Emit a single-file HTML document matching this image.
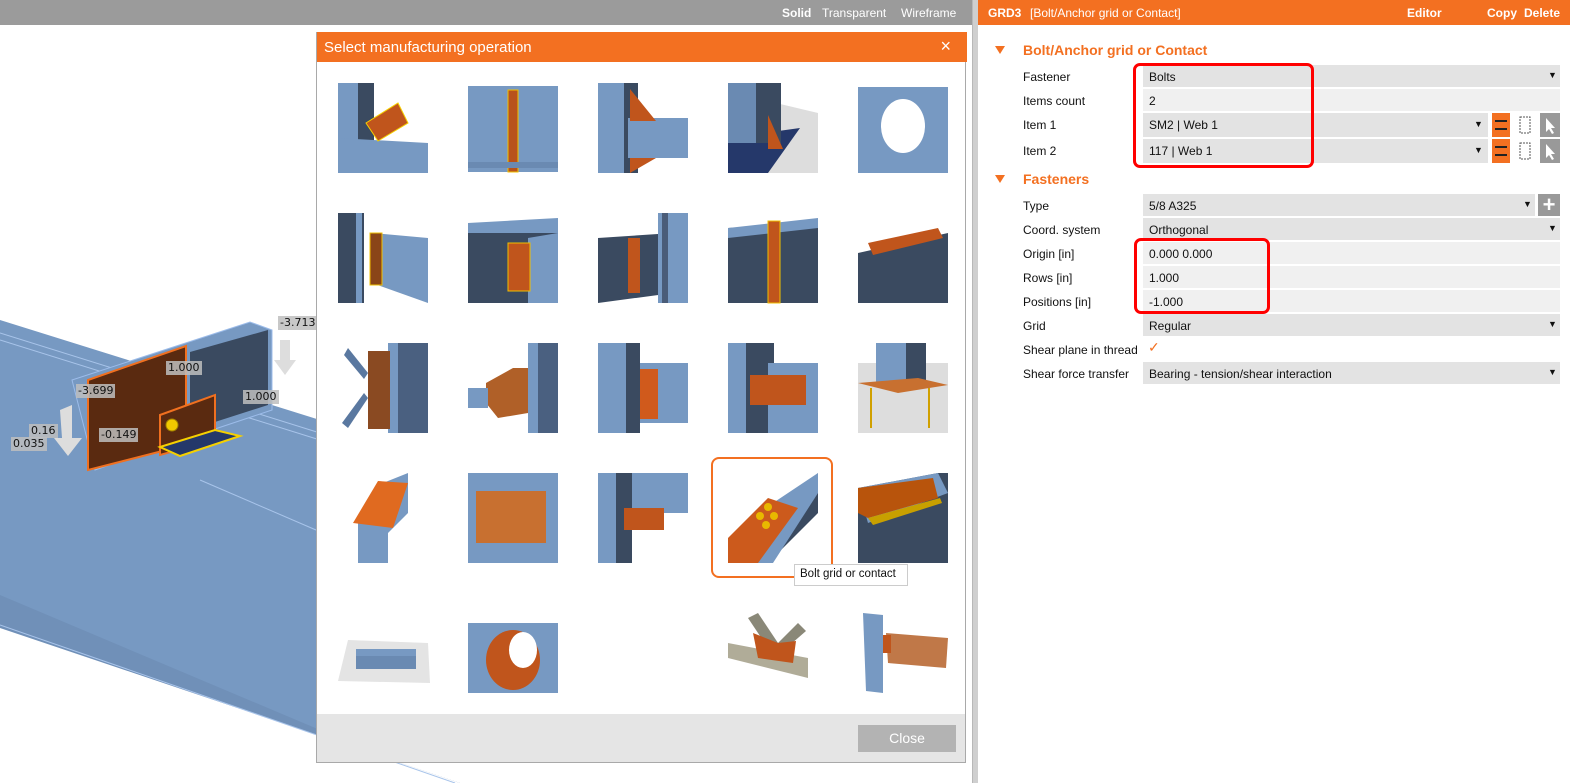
<!DOCTYPE html>
<html><head><meta charset="utf-8"><style>
*{margin:0;padding:0;box-sizing:border-box}
body{width:1570px;height:783px;overflow:hidden;background:#fff;font-family:"Liberation Sans",sans-serif;position:relative}
.abs{position:absolute}
.topbar{left:0;top:0;width:972px;height:25px;background:#9b9b9b;color:#fff;font-size:12px}
.topbar span{position:absolute;top:6px}
.split{left:972px;top:0;width:6px;height:783px;background:#cfcfcf;border-left:1px solid #b8b8b8}
.rhead{left:978px;top:0;width:592px;height:25px;background:#f37021;color:#fff;font-size:12px}
.rhead span{position:absolute;top:6px}
.dlg{left:316px;top:32px;width:650px;height:731px;border:1px solid #a9a9a9;border-top:none;background:#fff}
.dh{left:0;top:0;width:650px;height:30px;background:#f37021;color:#fff;font-size:15px;padding:7px 0 0 7px}
.foot{left:0;top:682px;width:648px;height:48px;background:#e5e5e5}
.close{left:541px;top:11px;width:98px;height:27px;background:#b3b3b3;color:#fff;font-size:14px;text-align:center;line-height:27px}
.lbl{position:absolute;left:1023px;font-size:12px;color:#111}
.fld{position:absolute;left:1143px;height:22px;font-size:12px;color:#111;padding:5px 0 0 6px}
.d{background:#e3e3e3}.l{background:#f0f0f0}
.arr{position:absolute;font-size:9px;color:#111}
.sec{position:absolute;left:1023px;font-size:14px;font-weight:bold;color:#f37021}
.tri{position:absolute;left:995px;width:0;height:0;border-left:5px solid transparent;border-right:5px solid transparent;border-top:8px solid #f37021}
.red{position:absolute;border:3px solid #f00;border-radius:7px}
.dim{position:absolute;background:rgba(190,190,190,.85);font-family:"DejaVu Sans",sans-serif;font-size:11px;color:#111;padding:0 2px;line-height:14px}
</style></head><body>

<svg class="abs" style="left:0;top:0" width="972" height="783">
 <polygon points="0,320 320,420 320,783 0,783" fill="#7799c2"/>
 <polygon points="0,595 0,628 460,783 320,783 320,730" fill="#7090b8"/>
 <polygon points="0,628 460,783 0,783" fill="#fff"/>
 <line x1="0" y1="625" x2="455" y2="783" stroke="#a8c4ea" stroke-width="1"/>
 <line x1="0" y1="333" x2="320" y2="433" stroke="#a8c4ea"/>
 <line x1="0" y1="340" x2="320" y2="440" stroke="#a8c4ea"/>
 <line x1="200" y1="480" x2="316" y2="530" stroke="#a8c4ea"/>
 <polygon points="72,380 250,322 272,330 272,410 182,440 95,470" fill="#7799c2" stroke="#9cbcea"/>
 <polygon points="190,352 268,330 268,405 190,430" fill="#3a4a60"/>
 <polygon points="88,380 186,346 186,445 88,470" fill="#5a2a10" stroke="#f07020" stroke-width="2"/>
 <polygon points="160,415 215,395 215,440 160,455" fill="#5a2a10" stroke="#f07020" stroke-width="2"/>
 <polygon points="160,447 215,430 240,436 180,456" fill="#24386a" stroke="#f5d000" stroke-width="2"/>
 <circle cx="172" cy="425" r="6" fill="#f0c800" stroke="#a08000"/>
 <polygon points="60,410 72,405 72,438 82,438 68,456 54,438 62,438" fill="#ddd"/>
 <polygon points="280,340 290,340 290,360 296,360 285,375 274,360 280,360" fill="#ddd"/>
</svg>
<div class="dim" style="left:278px;top:316px">-3.713</div>
<div class="dim" style="left:166px;top:361px">1.000</div>
<div class="dim" style="left:76px;top:384px">-3.699</div>
<div class="dim" style="left:243px;top:390px">1.000</div>
<div class="dim" style="left:99px;top:428px">-0.149</div>
<div class="dim" style="left:29px;top:424px">0.16</div>
<div class="dim" style="left:11px;top:437px">0.035</div>

<div class="abs topbar"><span style="left:782px;font-weight:bold">Solid</span><span style="left:822px">Transparent</span><span style="left:901px">Wireframe</span></div>
<div class="abs split"></div>
<div class="abs rhead"><span style="left:10px;font-weight:bold">GRD3</span><span style="left:52px">[Bolt/Anchor grid or Contact]</span><span style="left:429px;font-weight:bold">Editor</span><span style="left:509px;font-weight:bold">Copy</span><span style="left:546px;font-weight:bold">Delete</span></div>

<div class="abs dlg">
 <div class="abs dh">Select manufacturing operation<span style="position:absolute;right:16px;top:4px;font-size:18px;font-weight:normal">×</span></div>
 <svg class="abs" style="left:0;top:0" width="650" height="682">
  <g transform="translate(21,51)">
   <rect x="0" y="0" width="20" height="90" fill="#7799c2"/><rect x="20" y="0" width="16" height="90" fill="#3a4a60"/>
   <polygon points="0,55 90,60 90,90 0,90" fill="#7799c2"/><polygon points="28,40 60,20 70,40 40,58" fill="#c0551c" stroke="#f5d000"/>
  </g>
  <g transform="translate(151,54)">
   <rect width="90" height="86" fill="#7799c2"/><rect x="40" y="4" width="10" height="82" fill="#b8521c" stroke="#f0c000"/><rect y="76" width="90" height="6" fill="#6a8ab2"/>
  </g>
  <g transform="translate(281,51)">
   <rect width="26" height="90" fill="#7799c2"/><rect x="26" width="14" height="90" fill="#3a4a60"/>
   <rect x="30" y="35" width="60" height="40" fill="#7799c2"/><polygon points="32,6 58,38 32,38" fill="#c0551c"/><polygon points="32,75 58,75 32,90" fill="#c0551c"/>
  </g>
  <g transform="translate(411,51)">
   <polygon points="48,20 90,30 90,90 0,90 0,60" fill="#ddd"/><polygon points="0,55 72,45 40,90 0,90" fill="#25386a"/>
   <rect width="28" height="60" fill="#6a8ab2"/><rect x="28" width="25" height="60" fill="#3a4a60"/><polygon points="40,32 55,66 40,66" fill="#c0551c"/>
  </g>
  <g transform="translate(541,51)">
   <rect y="4" width="90" height="86" fill="#7799c2"/><ellipse cx="45" cy="43" rx="22" ry="27" fill="#fff"/>
  </g>
  <g transform="translate(21,181)">
   <rect width="26" height="90" fill="#3a4a60"/><rect x="18" width="6" height="90" fill="#7799c2"/><polygon points="34,20 90,25 90,90 34,70" fill="#7799c2"/><rect x="32" y="20" width="12" height="52" fill="#8a4518" stroke="#f0c000"/>
  </g>
  <g transform="translate(151,181)">
   <polygon points="0,10 90,10 90,90 0,90" fill="#3a4a60"/><polygon points="0,10 90,5 90,20 0,20" fill="#7799c2"/><polygon points="60,25 90,20 90,90 60,90" fill="#7799c2"/><rect x="40" y="30" width="22" height="48" fill="#c0551c" stroke="#f0c000"/>
  </g>
  <g transform="translate(281,181)">
   <polygon points="0,25 75,20 75,80 0,90" fill="#3a4a60"/><rect x="60" y="0" width="30" height="90" fill="#7799c2"/><rect x="64" width="6" height="90" fill="#4a5c78"/><rect x="30" y="25" width="12" height="55" fill="#c0551c"/>
  </g>
  <g transform="translate(411,181)">
   <polygon points="0,15 90,10 90,90 0,90" fill="#3a4a60"/><polygon points="0,15 90,5 90,15 0,25" fill="#7799c2"/><rect x="40" y="8" width="12" height="82" fill="#c0551c" stroke="#f0c000"/>
  </g>
  <g transform="translate(541,181)">
   <polygon points="0,40 90,20 90,90 0,90" fill="#3a4a60"/><polygon points="10,30 80,15 85,25 15,42" fill="#c0551c"/>
  </g>
  <g transform="translate(21,311)">
   <rect x="50" width="40" height="90" fill="#7799c2"/><rect x="60" width="30" height="90" fill="#4a6080"/><rect x="30" y="8" width="22" height="78" fill="#8a4a22"/><polygon points="10,5 30,30 26,36 6,12" fill="#5a78a0"/><polygon points="10,85 30,55 26,50 4,80" fill="#5a78a0"/>
  </g>
  <g transform="translate(151,311)">
   <rect x="60" width="30" height="90" fill="#7799c2"/><rect x="70" width="20" height="90" fill="#4a6080"/><polygon points="18,40 45,25 60,25 60,70 30,75 18,60" fill="#b06028"/><rect x="0" y="45" width="20" height="20" fill="#7799c2"/>
  </g>
  <g transform="translate(281,311)">
   <rect width="38" height="90" fill="#7799c2"/><rect x="28" width="14" height="90" fill="#3a4a60"/><rect x="42" y="20" width="48" height="60" fill="#7799c2"/><rect x="42" y="26" width="18" height="50" fill="#d05a1c"/>
  </g>
  <g transform="translate(411,311)">
   <rect width="18" height="90" fill="#7799c2"/><rect x="18" width="28" height="90" fill="#3a4a60"/><rect x="40" y="20" width="50" height="70" fill="#7799c2"/><rect x="22" y="32" width="56" height="30" fill="#c0551c"/>
  </g>
  <g transform="translate(541,311)">
   <rect y="20" width="90" height="70" fill="#ddd"/><rect x="18" width="30" height="40" fill="#7799c2"/><rect x="48" width="20" height="40" fill="#3a4a60"/><polygon points="0,40 60,35 90,42 40,50" fill="#c87030"/><rect x="12" y="45" width="2" height="40" fill="#d0a000"/><rect x="70" y="45" width="2" height="40" fill="#d0a000"/>
  </g>
  <g transform="translate(21,441)">
   <polygon points="20,90 20,50 45,10 70,0 70,40 50,60 50,90" fill="#7799c2"/><polygon points="15,50 40,8 70,10 55,55" fill="#e06a20"/>
  </g>
  <g transform="translate(151,441)">
   <rect width="90" height="90" fill="#7799c2"/><rect x="8" y="18" width="70" height="52" fill="#c87030"/>
  </g>
  <g transform="translate(281,441)">
   <rect width="22" height="90" fill="#7799c2"/><rect x="18" width="16" height="90" fill="#3a4a60"/><rect x="34" width="56" height="40" fill="#7799c2"/><rect x="26" y="35" width="40" height="22" fill="#c0551c"/>
  </g>
  <g transform="translate(411,441)">
   <polygon points="50,40 90,0 90,40 40,90" fill="#3a4a60"/><polygon points="30,40 90,0 90,20 45,90 30,90" fill="#7799c2"/><polygon points="0,65 40,25 70,35 30,90 0,90" fill="#cc5a1c"/>
   <circle cx="40" cy="34" r="4" fill="#e8b800"/><circle cx="32" cy="43" r="4" fill="#e8b800"/><circle cx="46" cy="43" r="4" fill="#e8b800"/><circle cx="38" cy="52" r="4" fill="#e8b800"/>
  </g>
  <g transform="translate(541,441)">
   <polygon points="0,15 80,0 90,0 90,90 0,90" fill="#3a4a60"/><polygon points="0,15 80,0 90,20 10,50" fill="#7799c2"/><polygon points="0,15 75,5 80,25 10,45 0,40" fill="#b8540c"/><polygon points="10,45 82,25 84,30 15,52" fill="#c8a000"/>
  </g>
  <g transform="translate(21,571)">
   <polygon points="10,37 90,40 92,80 0,78" fill="#e4e4e4"/><rect x="18" y="46" width="60" height="20" fill="#6a8ab2"/><rect x="18" y="46" width="60" height="7" fill="#7799c2"/>
  </g>
  <g transform="translate(151,571)">
   <rect y="20" width="90" height="70" fill="#7799c2"/><ellipse cx="45" cy="57" rx="27" ry="30" fill="#c0551c"/><ellipse cx="55" cy="47" rx="14" ry="18" fill="#fff"/>
  </g>
  <g transform="translate(411,571)">
   <polygon points="0,40 80,55 80,75 0,55" fill="#b0ac98"/><polygon points="20,15 30,10 50,40 40,45" fill="#8a8878"/><polygon points="70,20 78,28 55,48 48,42" fill="#8a8878"/><polygon points="25,30 50,40 68,38 65,60 30,55" fill="#c0551c"/>
  </g>
  <g transform="translate(541,571)">
   <polygon points="5,10 25,12 25,90 8,88" fill="#7799c2"/><polygon points="28,30 90,35 88,65 30,60" fill="#c07848"/><rect x="25" y="32" width="8" height="18" fill="#c0551c"/>
  </g>
  <rect x="395" y="426" width="120" height="119" rx="7" fill="none" stroke="#f37021" stroke-width="2"/>
 </svg>
 <div class="abs" style="left:477px;top:532px;width:114px;height:22px;background:#fff;border:1px solid #ccc;font-size:11.5px;padding:3px 0 0 5px;color:#111;white-space:nowrap;overflow:hidden">Bolt grid or contact</div>
 <div class="abs foot"><div class="abs close">Close</div></div>
</div>

<div class="tri" style="top:46px"></div><div class="sec" style="top:42px">Bolt/Anchor grid or Contact</div>
<div class="lbl" style="top:70px">Fastener</div><div class="fld d" style="top:65px;width:417px">Bolts</div><div class="arr" style="left:1548px;top:70px">▼</div>
<div class="lbl" style="top:94px">Items count</div><div class="fld l" style="top:89px;width:417px">2</div>
<div class="lbl" style="top:118px">Item 1</div><div class="fld d" style="top:113px;width:345px;height:24px">SM2 | Web 1</div><div class="arr" style="left:1474px;top:119px">▼</div>
<div class="lbl" style="top:144px">Item 2</div><div class="fld d" style="top:139px;width:345px;height:24px">117 | Web 1</div><div class="arr" style="left:1474px;top:145px">▼</div>
<svg class="abs" style="left:1492px;top:113px" width="78" height="52">
 <g><rect x="0" y="0" width="18" height="24" fill="#f37021"/><rect x="3" y="7" width="12" height="2" fill="#222"/><rect x="3" y="15" width="12" height="2" fill="#222"/>
 <rect x="28" y="4" width="10" height="16" fill="none" stroke="#555" stroke-dasharray="2,1"/>
 <rect x="48" y="0" width="20" height="24" fill="#999"/><path d="M54 5 L54 19 L57 16 L60 21 L62 20 L59 15 L63 15 Z" fill="#fff"/></g>
 <g transform="translate(0,26)"><rect x="0" y="0" width="18" height="24" fill="#f37021"/><rect x="3" y="7" width="12" height="2" fill="#222"/><rect x="3" y="15" width="12" height="2" fill="#222"/>
 <rect x="28" y="4" width="10" height="16" fill="none" stroke="#555" stroke-dasharray="2,1"/>
 <rect x="48" y="0" width="20" height="24" fill="#999"/><path d="M54 5 L54 19 L57 16 L60 21 L62 20 L59 15 L63 15 Z" fill="#fff"/></g>
</svg>
<div class="red" style="left:1133px;top:63px;width:181px;height:105px"></div>

<div class="tri" style="top:175px"></div><div class="sec" style="top:171px">Fasteners</div>
<div class="lbl" style="top:199px">Type</div><div class="fld d" style="top:194px;width:392px">5/8 A325</div><div class="arr" style="left:1523px;top:199px">▼</div>
<div class="abs" style="left:1538px;top:194px;width:22px;height:22px;background:#999;color:#fff;font-size:22px;line-height:21px;text-align:center;font-weight:bold">+</div>
<div class="lbl" style="top:223px">Coord. system</div><div class="fld d" style="top:218px;width:417px">Orthogonal</div><div class="arr" style="left:1548px;top:223px">▼</div>
<div class="lbl" style="top:247px">Origin [in]</div><div class="fld l" style="top:242px;width:417px">0.000 0.000</div>
<div class="lbl" style="top:271px">Rows [in]</div><div class="fld l" style="top:266px;width:417px">1.000</div>
<div class="lbl" style="top:295px">Positions [in]</div><div class="fld l" style="top:290px;width:417px">-1.000</div>
<div class="red" style="left:1134px;top:238px;width:136px;height:76px"></div>
<div class="lbl" style="top:319px">Grid</div><div class="fld d" style="top:314px;width:417px">Regular</div><div class="arr" style="left:1548px;top:319px">▼</div>
<div class="lbl" style="top:343px">Shear plane in thread</div><div class="abs" style="left:1148px;top:339px;color:#f37021;font-size:14px">✓</div>
<div class="lbl" style="top:367px">Shear force transfer</div><div class="fld d" style="top:362px;width:417px">Bearing - tension/shear interaction</div><div class="arr" style="left:1548px;top:367px">▼</div>
</body></html>
